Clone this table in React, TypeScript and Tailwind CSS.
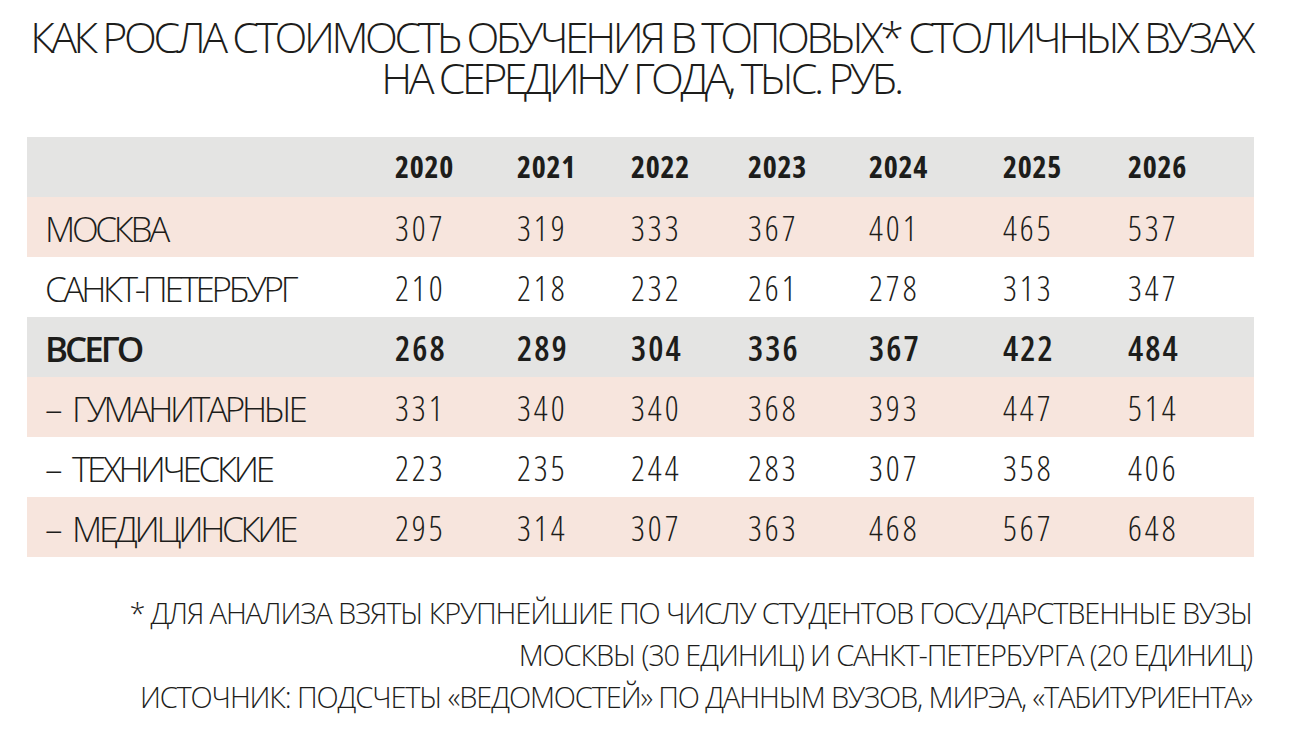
import React, { FC } from 'react';

type Row = {
  label: string;
  values: number[];
  tone: 'gray' | 'pink' | 'white';
  bold?: boolean;
};

const years = [2020, 2021, 2022, 2023, 2024, 2025, 2026];

const rows: Row[] = [
  { label: 'МОСКВА', values: [307, 319, 333, 367, 401, 465, 537], tone: 'pink' },
  { label: 'САНКТ-ПЕТЕРБУРГ', values: [210, 218, 232, 261, 278, 313, 347], tone: 'white' },
  { label: 'ВСЕГО', values: [268, 289, 304, 336, 367, 422, 484], tone: 'gray', bold: true },
  { label: '– ГУМАНИТАРНЫЕ', values: [331, 340, 340, 368, 393, 447, 514], tone: 'pink' },
  { label: '– ТЕХНИЧЕСКИЕ', values: [223, 235, 244, 283, 307, 358, 406], tone: 'white' },
  { label: '– МЕДИЦИНСКИЕ', values: [295, 314, 307, 363, 468, 567, 648], tone: 'pink' },
];

const toneClass = {
  gray: 'bg-[#e4e4e3]',
  pink: 'bg-[#f7e5dd]',
  white: 'bg-white',
};

// column starts picked off the reference (label col + 7 year cols)
const gridCols = 'grid grid-cols-[368px_122px_114px_117px_121px_134px_125px_1fr] items-center h-[60px] pt-[10px]';

const TableRow: FC<{ row: Row }> = ({ row }) => (
  <div className={`${gridCols} ${toneClass[row.tone]} ${row.bold ? 'font-semibold' : 'font-light'}`}>
    <span
      className={`pl-[18px] text-[35px] [word-spacing:7px] ${row.bold ? 'tracking-[-3px]' : 'tracking-[-3.3px]'}`}
    >
      {row.label}
    </span>
    {row.values.map((v, i) => (
      <span
        key={i}
        className={`text-[34px] font-stretch-condensed ${row.bold ? 'tracking-[2px]' : 'tracking-[3px]'}`}
      >
        {v}
      </span>
    ))}
    <span />
  </div>
);

const App: FC = () => {
  return (
    <div
      className="w-[1294px] h-[734px] bg-white text-[#1d1d1b] overflow-hidden"
      style={{ fontFamily: '"Open Sans", "Noto Sans", "DejaVu Sans", sans-serif' }}
    >
      <h1 className="pt-[16px] pr-[12px] text-center text-[43px] leading-[41px] font-light tracking-[-3.5px] whitespace-nowrap">
        <div>КАК РОСЛА СТОИМОСТЬ ОБУЧЕНИЯ В ТОПОВЫХ* СТОЛИЧНЫХ ВУЗАХ</div>
        <div>НА СЕРЕДИНУ ГОДА, ТЫС. РУБ.</div>
      </h1>

      <div className="mt-[39px] ml-[27px] w-[1227px] leading-none">
        <div className={`${gridCols} bg-[#e4e4e3] font-bold`}>
          <span />
          {years.map((y) => (
            <span key={y} className="text-[30px] font-stretch-condensed tracking-[0.7px]">{y}</span>
          ))}
          <span />
        </div>
        {rows.map((r) => (
          <TableRow key={r.label} row={r} />
        ))}
      </div>

      <div className="mt-[35px] pr-[42px] text-right text-[29px] leading-[42px] font-light tracking-[-1.15px] whitespace-nowrap">
        <div>* ДЛЯ АНАЛИЗА ВЗЯТЫ КРУПНЕЙШИЕ ПО ЧИСЛУ СТУДЕНТОВ ГОСУДАРСТВЕННЫЕ ВУЗЫ</div>
        <div>МОСКВЫ (30 ЕДИНИЦ) И САНКТ-ПЕТЕРБУРГА (20 ЕДИНИЦ)</div>
        <div>ИСТОЧНИК: ПОДСЧЕТЫ «ВЕДОМОСТЕЙ» ПО ДАННЫМ ВУЗОВ, МИРЭА, «ТАБИТУРИЕНТА»</div>
      </div>
    </div>
  );
};

export default App;
